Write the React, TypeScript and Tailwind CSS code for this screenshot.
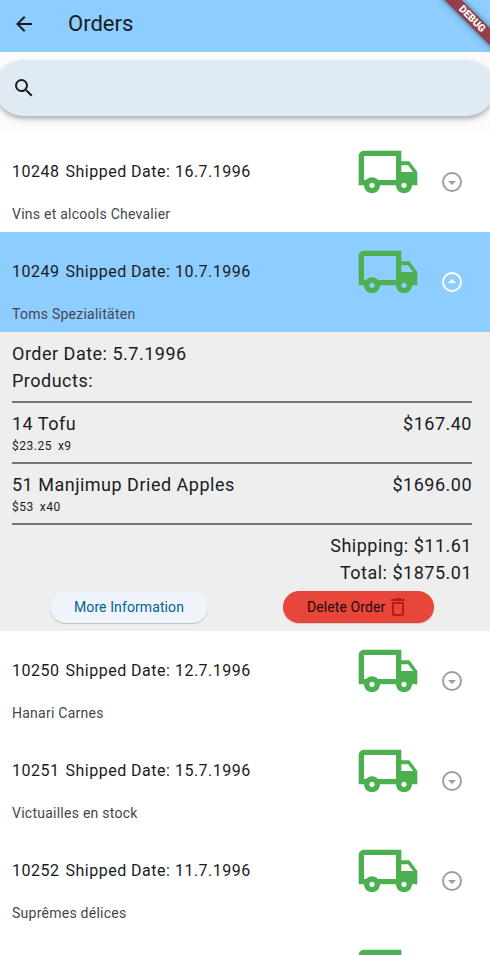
import { MdArrowBack, MdSearch, MdDeleteOutline } from "react-icons/md";

type Order = { id: number; shipped: string; customer: string };

const before: Order[] = [
  { id: 10248, shipped: "16.7.1996", customer: "Vins et alcools Chevalier" },
];
const selected: Order = { id: 10249, shipped: "10.7.1996", customer: "Toms Spezialitäten" };
const after: Order[] = [
  { id: 10250, shipped: "12.7.1996", customer: "Hanari Carnes" },
  { id: 10251, shipped: "15.7.1996", customer: "Victuailles en stock" },
  { id: 10252, shipped: "11.7.1996", customer: "Suprêmes délices" },
];

const products = [
  { name: "14 Tofu", total: "$167.40", price: "$23.25", qty: "x9" },
  { name: "51 Manjimup Dried Apples", total: "$1696.00", price: "$53", qty: "x40" },
];

function Truck() {
  return (
    <svg viewBox="0 0 24 24" fill="currentColor" className="mt-2 size-16 shrink-0 text-[#4caf50]">
      <path d="M20 8h-3V4H3c-1.1 0-2 .9-2 2v11h2c0 1.66 1.34 3 3 3s3-1.34 3-3h6c0 1.66 1.34 3 3 3s3-1.34 3-3h2v-5l-3-4zm-.5 1.5l1.96 2.5H17V9.5h2.5zM6 18c-.55 0-1-.45-1-1s.45-1 1-1 1 .45 1 1-.45 1-1 1zm2.22-3c-.55-.61-1.33-1-2.22-1s-1.67.39-2.22 1H3V6h12v9H8.22zM18 18c-.55 0-1-.45-1-1s.45-1 1-1 1 .45 1 1-.45 1-1 1z" />
    </svg>
  );
}

function OrderRow({ order, open = false }: { order: Order; open?: boolean }) {
  return (
    <div className={`flex h-[100px] shrink-0 ${open ? "bg-[#8ecdff]" : "bg-white"}`}>
      <div className="flex-1 pl-3 pt-7">
        <div className="flex gap-1.5 text-base leading-6 tracking-[0.5px] text-[#191c1e]">
          <span>{order.id}</span>
          <span>Shipped Date: {order.shipped}</span>
        </div>
        <div className="mt-5 text-sm leading-5 tracking-[0.25px] text-[#42474e]">{order.customer}</div>
      </div>
      <Truck />
      <svg
        viewBox="0 0 24 24"
        className={`ml-5 mr-[26px] mt-[38px] size-6 shrink-0 ${open ? "rotate-180 text-white" : "text-[#9e9e9e]"}`}
      >
        <circle cx="12" cy="12" r="9" fill="none" stroke="currentColor" strokeWidth="2" />
        <path d="M8 11h8l-4 4z" fill="currentColor" />
      </svg>
    </div>
  );
}

function OrderDetails() {
  return (
    <div className="h-[299px] shrink-0 bg-[#eeeeee] pl-3 pr-[18px] pt-2 text-lg leading-[27px] tracking-[0.5px] text-[#191c1e]">
      <div>Order Date: 5.7.1996</div>
      <div>Products:</div>
      <div className="mt-[7px] border-t-2 border-[#757575]" />
      {products.map((p) => (
        <div key={p.name} className="h-[61px] border-b-2 border-[#757575] pt-[7px]">
          <div className="flex justify-between">
            <span>{p.name}</span>
            <span>{p.total}</span>
          </div>
          <div className="flex gap-1.5 text-xs leading-[18px] tracking-[0.5px]">
            <span>{p.price}</span>
            <span>{p.qty}</span>
          </div>
        </div>
      ))}
      <div className="pt-[7px] text-right">
        <div>Shipping: $11.61</div>
        <div>Total: $1875.01</div>
      </div>
      <div className="mt-[5px] flex text-sm tracking-[0.1px]">
        <button className="ml-[38px] flex h-8 w-[158px] items-center justify-center rounded-full bg-[#eef4f9] text-[#006494] shadow-[0_1px_1px_rgba(0,0,0,0.2)]">
          More Information
        </button>
        <button className="ml-[75px] flex h-8 w-[151px] items-center gap-px rounded-full bg-[#e8453b] pl-6 text-[#1f0a09] shadow-[0_1px_1px_rgba(0,0,0,0.15)]">
          Delete Order
          <MdDeleteOutline className="size-6 text-[#b71c1c]" />
        </button>
      </div>
    </div>
  );
}

export default function App() {
  return (
    <div className="relative flex h-[955px] w-[490px] flex-col overflow-hidden bg-[#fcfcff] font-[Roboto,sans-serif]">
      <header className="flex h-[52px] shrink-0 items-center bg-[#8ecdff] pb-1 pl-3 text-[#191c1e]">
        <MdArrowBack className="size-6" />
        <h1 className="ml-8 text-[22px] leading-7">Orders</h1>
      </header>
      <div className="-mx-[5px] mb-4 mt-2 flex h-14 shrink-0 items-center rounded-full bg-[#e0eaf2] pl-[17px] text-[#191c1e] shadow-[0_3px_5px_-1px_rgba(0,0,0,0.25),0_3px_8px_rgba(0,0,0,0.14)]">
        <MdSearch className="size-6" />
      </div>
      {before.map((o) => (
        <OrderRow key={o.id} order={o} />
      ))}
      <OrderRow order={selected} open />
      <OrderDetails />
      {after.map((o) => (
        <OrderRow key={o.id} order={o} />
      ))}
      {/* Top edge of the next order, scrolled mostly out of view */}
      <div className="flex h-6 shrink-0 justify-end overflow-hidden bg-white pr-[70px]">
        <Truck />
      </div>
      <div className="absolute left-[431.5px] top-[12.5px] flex h-3 w-20 rotate-45 items-center justify-center bg-[#943f4c] text-[10.2px] font-black leading-3 text-white shadow-[0_0_6px_rgba(0,0,0,0.5)]">
        DEBUG
      </div>
    </div>
  );
}
